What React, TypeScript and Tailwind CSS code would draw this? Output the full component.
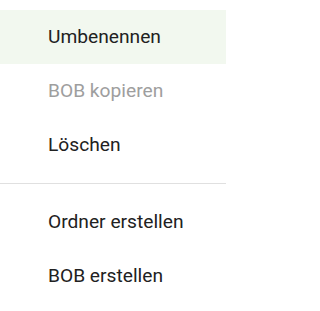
import React from 'react';

const groups = [
  [
    { label: 'Umbenennen', active: true },
    { label: 'BOB kopieren', disabled: true },
    { label: 'Löschen' },
  ],
  [{ label: 'Ordner erstellen' }, { label: 'BOB erstellen' }],
];

export default function App() {
  return (
    <div className="w-[226px] h-[311px] bg-white pt-[10px] font-['Roboto',sans-serif] overflow-hidden">
      {groups.map((items, gi) => (
        <div key={gi}>
          {gi > 0 && <div className="my-[11px] h-px bg-[#e0e0e0]" />}
          {items.map((item) => (
            <div
              key={item.label}
              className={
                'h-[54px] flex items-center pl-[48px] text-[19.2px] ' +
                (item.active ? 'bg-[#f2f8ef] ' : '') +
                (item.disabled ? 'text-[#9e9e9e]' : 'text-[#212121]')
              }
            >
              {item.label}
            </div>
          ))}
        </div>
      ))}
    </div>
  );
}
